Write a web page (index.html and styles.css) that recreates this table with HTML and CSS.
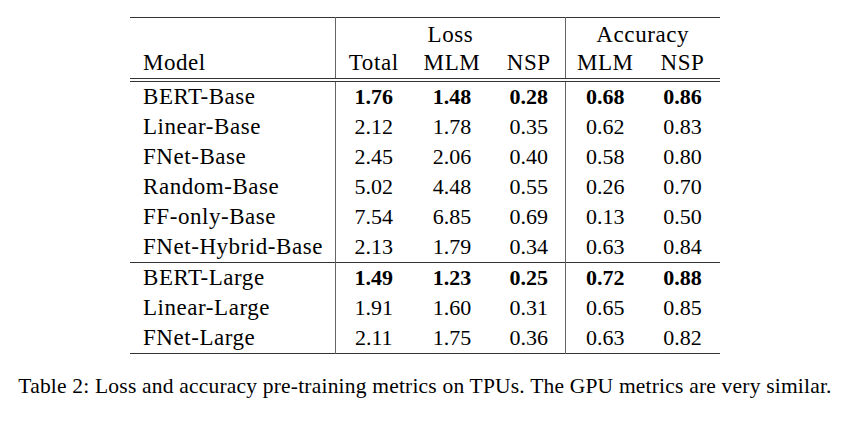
FILE: index.html
```html
<!DOCTYPE html>
<html lang="en">
<head>
<meta charset="utf-8">
<title>Table 2</title>
<link rel="stylesheet" href="styles.css">
</head>
<body>
<figure class="figure">
  <table class="metrics">
    <colgroup>
      <col class="c-model">
      <col class="c-total">
      <col class="c-lmlm">
      <col class="c-lnsp">
      <col class="c-amlm">
      <col class="c-ansp">
    </colgroup>
    <thead>
      <tr class="group-row">
        <th class="label"></th>
        <th class="word sep" colspan="3">Loss</th>
        <th class="word sep" colspan="2">Accuracy</th>
      </tr>
      <tr class="head-row">
        <th class="label">Model</th>
        <th class="word sep">Total</th>
        <th class="word">MLM</th>
        <th class="word">NSP</th>
        <th class="word sep">MLM</th>
        <th class="word">NSP</th>
      </tr>
    </thead>
    <tbody class="group">
      <tr class="best">
        <td class="label">BERT-Base</td>
        <td class="num sep">1.76</td><td class="num">1.48</td><td class="num">0.28</td>
        <td class="num sep">0.68</td><td class="num">0.86</td>
      </tr>
      <tr>
        <td class="label">Linear-Base</td>
        <td class="num sep">2.12</td><td class="num">1.78</td><td class="num">0.35</td>
        <td class="num sep">0.62</td><td class="num">0.83</td>
      </tr>
      <tr>
        <td class="label">FNet-Base</td>
        <td class="num sep">2.45</td><td class="num">2.06</td><td class="num">0.40</td>
        <td class="num sep">0.58</td><td class="num">0.80</td>
      </tr>
      <tr>
        <td class="label">Random-Base</td>
        <td class="num sep">5.02</td><td class="num">4.48</td><td class="num">0.55</td>
        <td class="num sep">0.26</td><td class="num">0.70</td>
      </tr>
      <tr>
        <td class="label">FF-only-Base</td>
        <td class="num sep">7.54</td><td class="num">6.85</td><td class="num">0.69</td>
        <td class="num sep">0.13</td><td class="num">0.50</td>
      </tr>
      <tr class="last">
        <td class="label">FNet-Hybrid-Base</td>
        <td class="num sep">2.13</td><td class="num">1.79</td><td class="num">0.34</td>
        <td class="num sep">0.63</td><td class="num">0.84</td>
      </tr>
    </tbody>
    <tbody class="group">
      <tr class="best">
        <td class="label">BERT-Large</td>
        <td class="num sep">1.49</td><td class="num">1.23</td><td class="num">0.25</td>
        <td class="num sep">0.72</td><td class="num">0.88</td>
      </tr>
      <tr>
        <td class="label">Linear-Large</td>
        <td class="num sep">1.91</td><td class="num">1.60</td><td class="num">0.31</td>
        <td class="num sep">0.65</td><td class="num">0.85</td>
      </tr>
      <tr class="last">
        <td class="label">FNet-Large</td>
        <td class="num sep">2.11</td><td class="num">1.75</td><td class="num">0.36</td>
        <td class="num sep">0.63</td><td class="num">0.82</td>
      </tr>
    </tbody>
  </table>
  <figcaption class="caption">Table 2: Loss and accuracy pre-training metrics on TPUs. The GPU metrics are very similar.</figcaption>
</figure>
</body>
</html>
```

FILE: styles.css
```css
html, body {
  margin: 0;
  padding: 0;
  background: #ffffff;
}

body {
  font-family: "Liberation Serif", "Times New Roman", serif;
  color: #000000;
}

.figure {
  margin: 0;
  width: 850px;
  padding-top: 17px;
  display: flex;
  flex-direction: column;
  align-items: center;
}

.metrics {
  border-collapse: collapse;
  table-layout: fixed;
  width: 590px;
  font-size: 22px;
  border-top: 1px solid #333333;
  border-bottom: 1px solid #333333;
}

.c-model { width: 206px; }
.c-total { width: 75px; }
.c-lmlm { width: 82px; }
.c-lnsp { width: 72px; }
.c-amlm { width: 80px; }
.c-ansp { width: 75px; }

.metrics th,
.metrics td {
  padding: 0;
  line-height: 30px;
  font-weight: normal;
  white-space: nowrap;
}

.metrics .label {
  text-align: left;
  padding-left: 13px;
  font-size: 23px;
  letter-spacing: 0.55px;
}

.metrics .word {
  text-align: center;
  font-size: 23px;
  letter-spacing: 0.6px;
}

.metrics .num {
  text-align: center;
}

.metrics .sep {
  border-left: 1px solid #666666;
}

.group-row th {
  line-height: 26px;
  padding-top: 4px;
}

.head-row th {
  border-bottom: 4px double #333333;
}

.group .best td.num {
  font-weight: bold;
}

.group + .group tr:first-child td {
  border-top: 1px solid #333333;
}

.caption {
  margin-top: 20px;
  font-size: 21.5px;
  letter-spacing: 0.2px;
  line-height: 24px;
  white-space: nowrap;
}
```
